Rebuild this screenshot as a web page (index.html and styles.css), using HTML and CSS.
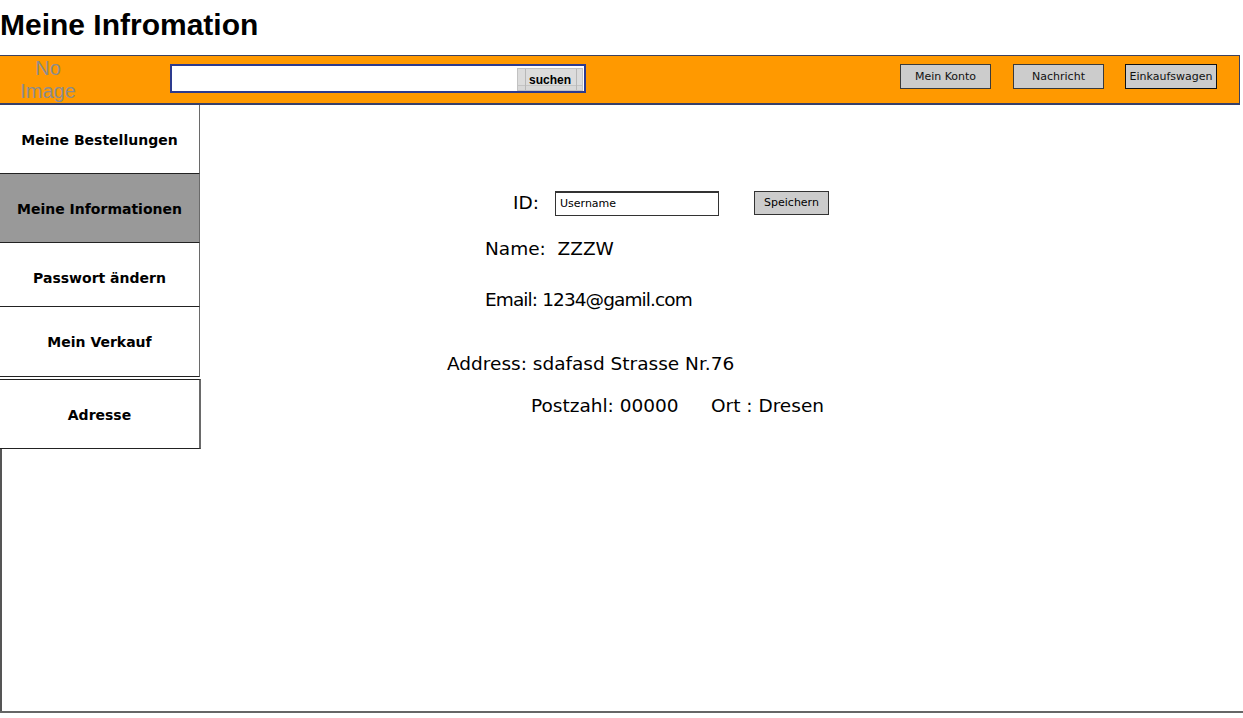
FILE: index.html
```html
<!DOCTYPE html>
<html lang="de">
<head>
<meta charset="utf-8">
<title>Meine Infromation</title>
<link rel="stylesheet" href="styles.css">
</head>
<body>
<h1 class="title">Meine Infromation</h1>
<header class="topbar">
  <div class="logo">No<br>Image</div>
  <div class="search">
    <input class="search-input" type="text" value="">
    <button class="search-btn">suchen</button>
  </div>
  <nav class="nav">
    <button class="nav-btn">Mein Konto</button>
    <button class="nav-btn">Nachricht</button>
    <button class="nav-btn nav-btn-wide">Einkaufswagen</button>
  </nav>
</header>
<main class="main">
  <aside class="sidebar">
    <div class="side-item h69">Meine Bestellungen</div>
    <div class="side-item h69 active">Meine Informationen</div>
    <div class="side-item h64">Passwort ändern</div>
    <div class="side-item h70">Mein Verkauf</div>
    <div class="side-item h70 boxed">Adresse</div>
    <div class="side-fill"></div>
  </aside>
  <section class="content">
    <div class="row row-id">
      <span class="id-label">ID:</span>
      <input class="id-input" type="text" value="Username">
      <button class="save-btn">Speichern</button>
    </div>
    <div class="row row-name">Name:&nbsp; ZZZW</div>
    <div class="row row-email">Email: 1234@gamil.com</div>
    <div class="row row-address">Address: sdafasd Strasse Nr.76</div>
    <div class="row row-plz"><span class="plz">Postzahl: 00000</span><span>Ort : Dresen</span></div>
  </section>
</main>
</body>
</html>
```
FILE: styles.css
```css
html, body {
  margin: 0;
  padding: 0;
  background: #fff;
}
body {
  width: 1243px;
  font-family: "DejaVu Sans", sans-serif;
  color: #000;
}
.title {
  margin: 0 0 12px 0;
  padding-top: 7px;
  font-family: "Liberation Sans", Arial, sans-serif;
  font-weight: bold;
  font-size: 30px;
  line-height: 36px;
}
.topbar {
  display: flex;
  align-items: flex-start;
  box-sizing: border-box;
  width: 1240px;
  height: 50px;
  background: #ff9900;
  border-top: 1px solid #3c4260;
  border-bottom: 2px solid #36406a;
  border-right: 1px solid #3c4260;
}
.logo {
  width: 96px;
  height: 47px;
  box-sizing: border-box;
  padding-top: 1px;
  text-align: center;
  font-family: "Liberation Sans", Arial, sans-serif;
  font-size: 20px;
  line-height: 23px;
  color: #8c8c8c;
}
.search {
  display: flex;
  align-items: flex-start;
  box-sizing: border-box;
  margin: 8px 0 0 74px;
  width: 416px;
  height: 29px;
  background: #fff;
  border: 2px solid #2d3b8e;
}
.search-input {
  flex: 1;
  border: 0;
  outline: 0;
  height: 25px;
  padding: 0;
  background: transparent;
}
.search-btn {
  margin: 2px 1px 0 0;
  width: 66px;
  height: 23px;
  padding: 0;
  border: 1px solid #c2c2c2;
  background:
    linear-gradient(90deg, transparent 7px, #b8b8b8 7px, #b8b8b8 8px, transparent 8px, transparent 58px, #b8b8b8 58px, #b8b8b8 59px, transparent 59px),
    linear-gradient(180deg, #dcdcdc 0, #dcdcdc 16px, #c4c4c4 16px, #c4c4c4 17px, #d8d8d8 17px);
  font-family: "Liberation Sans", Arial, sans-serif;
  font-weight: bold;
  font-size: 12px;
  color: #000;
}
.nav {
  display: flex;
  gap: 22px;
  margin: 8px 22px 0 auto;
}
.nav-btn {
  box-sizing: border-box;
  width: 91px;
  height: 25px;
  padding: 0;
  background: #cccccc;
  border: 1px solid #3a3a3a;
  font-family: "DejaVu Sans", sans-serif;
  font-size: 11px;
  color: #111;
}
.nav-btn-wide {
  width: 92px;
  margin-left: -1px;
  border-color: #111;
}
.main {
  display: flex;
  height: 608px;
  box-sizing: border-box;
  border-bottom: 2px solid #666;
}
.sidebar {
  display: flex;
  flex-direction: column;
  width: 201px;
  flex: none;
}
.side-item {
  display: flex;
  align-items: center;
  justify-content: center;
  box-sizing: border-box;
  width: 200px;
  border-right: 1px solid #6a6a6a;
  border-bottom: 1px solid #222;
  font-weight: bold;
  font-size: 14px;
  padding-top: 1px;
}
.h69 { height: 69px; }
.h64 { height: 64px; padding-top: 7px; }
.h70 { height: 70px; }
.active { background: #999999; }
.boxed {
  width: 201px;
  margin-top: 2px;
  border-top: 1px solid #222;
  border-right: 2px solid #6a6a6a;
}
.side-fill {
  flex: 1;
  border-left: 2px solid #555;
}
.content {
  flex: 1;
  padding-top: 85px;
  font-size: 18.5px;
}
.row {
  line-height: 26px;
  height: 26px;
  white-space: nowrap;
}
.row-id {
  display: flex;
  align-items: center;
  margin-left: 312px;
}
.id-label {
  width: 42px;
}
.id-input {
  box-sizing: border-box;
  width: 164px;
  height: 25px;
  margin: 0;
  padding: 0 4px;
  border: 1px solid #333;
  border-top-width: 2px;
  font-family: "DejaVu Sans", sans-serif;
  font-size: 11px;
  color: #000;
}
.save-btn {
  box-sizing: border-box;
  width: 75px;
  height: 24px;
  margin: -1px 0 0 35px;
  padding: 0;
  background: #cccccc;
  border: 1px solid #333;
  font-family: "DejaVu Sans", sans-serif;
  font-size: 11px;
  color: #000;
}
.row-name { margin: 20px 0 0 284px; }
.row-email { margin: 25px 0 0 284px; letter-spacing: -0.9px; }
.row-address { margin: 38px 0 0 246px; }
.row-plz { margin: 16px 0 0 330px; }
.plz {
  display: inline-block;
  width: 180px;
}
```
